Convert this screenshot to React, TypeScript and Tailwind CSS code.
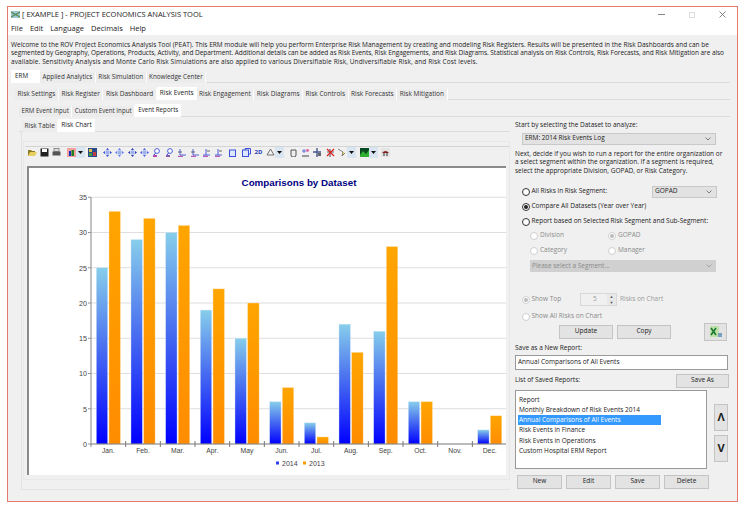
import type { ReactNode } from 'react'

const F = "font-['Open_Sans','Liberation_Sans',sans-serif]"

const months = ['Jan.', 'Feb.', 'Mar.', 'Apr.', 'May', 'Jun.', 'Jul.', 'Aug.', 'Sep.', 'Oct.', 'Nov.', 'Dec.']
const y2014 = [25, 29, 30, 19, 15, 6, 3, 17, 16, 6, 0, 2]
const y2013 = [33, 32, 31, 22, 20, 8, 1, 13, 28, 6, 0, 4]

function Tab({ label, active }: { label: string; active?: boolean }) {
  if (label === 'ERM') {
    return <div className="mb-[-1px] flex h-[13px] w-[29px] items-center bg-white pl-[4px] text-[#222]">{label}</div>
  }
  return (
    <div
      className={
        active
          ? 'flex h-[13px] items-center bg-white px-[3px] mb-[-1px] text-[#222]'
          : 'flex h-[11px] items-center bg-[#ececec] px-[2.5px] mt-[2px] border-r border-white text-[#333]'
      }
    >
      {label}
    </div>
  )
}

function TabRow({ tabs, active, className }: { tabs: string[]; active: string; className: string }) {
  return (
    <div className={`flex items-start border-b border-[#dcdcdc] ${className}`}>
      {tabs.map((t) => (
        <Tab key={t} label={t} active={t === active} />
      ))}
    </div>
  )
}

function Radio({ label, checked, off, className = '' }: { label: string; checked?: boolean; off?: boolean; className?: string }) {
  return (
    <div className={`flex items-center gap-[1.5px] ${off ? 'text-[#8a8a8a]' : 'text-[#222]'} ${className}`}>
      <span
        className={`flex h-[8px] w-[8px] items-center justify-center rounded-full border bg-white ${
          off ? 'border-[#cfcfcf]' : 'border-[#333]'
        }`}
      >
        {checked && <span className={`h-[4px] w-[4px] rounded-full ${off ? 'bg-[#bbb]' : 'bg-[#222]'}`} />}
      </span>
      {label}
    </div>
  )
}

function Chevron({ color = '#666' }: { color?: string }) {
  return (
    <svg width="6" height="4" viewBox="0 0 6 4" className="shrink-0">
      <path d="M0.5 0.5 L3 3 L5.5 0.5" fill="none" stroke={color} strokeWidth="0.8" />
    </svg>
  )
}

function Btn({ children, className }: { children: ReactNode; className: string }) {
  return (
    <div className={`flex items-center justify-center border border-[#c4c4c4] bg-[#e3e3e3] text-[#222] ${className}`}>
      {children}
    </div>
  )
}

// toolbar glyphs, drawn on a 9x9 box
function Cross({ color = '#3a50d8' }: { color?: string }) {
  return (
    <svg width="9" height="9" viewBox="0 0 9 9">
      <path d="M4.5 0 L6 2 L3 2 Z M4.5 9 L6 7 L3 7 Z M0 4.5 L2 3 L2 6 Z M9 4.5 L7 3 L7 6 Z" fill={color} />
      <rect x="2.5" y="2.5" width="4" height="4" fill="#9fb0f0" />
    </svg>
  )
}

function Pin({ color = '#a020a0' }: { color?: string }) {
  return (
    <svg width="9" height="9" viewBox="0 0 9 9">
      <circle cx="5" cy="3" r="2.4" fill="#fff" stroke="#3a50d8" strokeWidth="0.9" />
      <path d="M1 8 H5" stroke={color} strokeWidth="1.6" />
      <path d="M3.5 5 L2 7" stroke="#3a50d8" />
    </svg>
  )
}

function Axis({ flip }: { flip?: boolean }) {
  return (
    <svg width="9" height="9" viewBox="0 0 9 9">
      <path d={flip ? 'M1 7 H8 M4 1 V7' : 'M3 1 V7 M3 7 H9'} stroke="#3a50d8" strokeWidth="0.9" fill="none" />
      <path d={flip ? 'M5 3 H8' : 'M1 4 H5'} stroke="#555" strokeWidth="0.9" />
      <path d="M1 8.3 H6" stroke="#a020a0" strokeWidth="0.9" />
    </svg>
  )
}

function Square({ double }: { double?: boolean }) {
  return (
    <svg width="9" height="9" viewBox="0 0 9 9">
      <rect x="0.5" y="2" width="6" height="6.5" fill="#dfe6ff" stroke="#3a50d8" />
      {double && <path d="M3 2 V0.5 H8.5 V6 H7" fill="none" stroke="#3a50d8" />}
    </svg>
  )
}

function Drop() {
  return (
    <span className="flex h-[11px] w-[9px] items-center justify-center bg-[#d9e6f2]">
      <svg width="5" height="3" viewBox="0 0 5 3">
        <path d="M0 0 H5 L2.5 3 Z" fill="#111" />
      </svg>
    </span>
  )
}

function Toolbar() {
  return (
    <div className="flex h-[11px] items-center gap-[3.4px]">
      <svg width="9" height="9" viewBox="0 0 9 9">
        <path d="M0 2 H3 L4 3 H7 V8 H0 Z" fill="#8a7a20" />
        <path d="M2 4 H9 L7 8 H0 Z" fill="#e8d060" />
      </svg>
      <svg width="9" height="9" viewBox="0 0 9 9">
        <rect x="0.5" y="0.5" width="8" height="8" fill="#222" />
        <rect x="2" y="1" width="5" height="3" fill="#fff" />
      </svg>
      <svg width="9" height="9" viewBox="0 0 9 9">
        <rect x="2" y="0.5" width="5" height="3" fill="#ddd" stroke="#555" strokeWidth="0.6" />
        <rect x="0.5" y="3.5" width="8" height="4" fill="#555" />
      </svg>
      <span className="ml-[2px] flex items-center">
        <svg width="9" height="9" viewBox="0 0 9 9">
          <rect x="0" y="0" width="9" height="9" fill="#f4a0a0" />
          <rect x="2" y="3" width="2" height="5" fill="#1030c0" />
          <rect x="4.5" y="2" width="2.5" height="6" fill="#208020" />
        </svg>
        <Drop />
      </span>
      <svg width="9" height="9" viewBox="0 0 9 9">
        <rect width="9" height="9" fill="#2a4a90" />
        <rect x="1" y="1" width="3" height="3" fill="#e0c040" />
        <rect x="5" y="4" width="3" height="4" fill="#c04040" />
        <rect x="1" y="5" width="3" height="3" fill="#40a040" />
      </svg>
      <span className="ml-[-1px] w-0" />
      <Cross />
      <Cross color="#5a80f0" />
      <Cross color="#2a3ab0" />
      <Cross color="#4a60e0" />
      <Pin />
      <Pin color="#7030a0" />
      <Axis />
      <Axis />
      <Axis flip />
      <Axis flip />
      <span className="ml-[-1px] w-0" />
      <Square />
      <Square double />
      <span className="w-[9px] text-center text-[6px] font-bold leading-[9px] text-[#2a3ab8]">2D</span>
      <span className="flex items-center">
        <svg width="9" height="9" viewBox="0 0 9 9">
          <path d="M4.5 1 L8 7 H1 Z" fill="#eee" stroke="#555" strokeWidth="0.8" />
        </svg>
        <Drop />
      </span>
      <svg width="9" height="9" viewBox="0 0 9 9" className="ml-[1px]">
        <path d="M2 4 V2 H7 V7 Q7 9 5 9 H4 Q2 9 2 7 Z" fill="#eee" stroke="#444" strokeWidth="0.9" />
      </svg>
      <svg width="9" height="9" viewBox="0 0 9 9">
        <circle cx="3" cy="3" r="1.8" fill="#8090e0" />
        <circle cx="6.5" cy="2.5" r="1.4" fill="#e060a0" />
        <path d="M1 8 H8" stroke="#444" />
      </svg>
      <svg width="9" height="9" viewBox="0 0 9 9">
        <path d="M4 0 V9 M0 4 H8" stroke="#4a5a90" strokeWidth="1.4" />
        <rect x="5" y="5" width="3" height="3" fill="#666" />
      </svg>
      <svg width="9" height="9" viewBox="0 0 9 9">
        <path d="M4 1 V9 M1 4 H8" stroke="#667" strokeWidth="1.2" />
        <path d="M1 1 L8 8 M8 1 L1 8" stroke="#e02020" strokeWidth="1.2" />
      </svg>
      <span className="flex items-center">
        <svg width="9" height="9" viewBox="0 0 9 9">
          <path d="M0 1 L5 4 L4 8 L7 5" fill="#f0ee60" stroke="#555" strokeWidth="0.7" />
        </svg>
        <Drop />
      </span>
      <span className="flex items-center">
        <svg width="9" height="9" viewBox="0 0 9 9">
          <rect width="9" height="9" fill="#0a4a20" />
          <path d="M0 7 L3 3 L6 6 L9 2 V9 H0 Z" fill="#30b030" />
        </svg>
        <Drop />
      </span>
      <svg width="9" height="9" viewBox="0 0 9 9">
        <rect width="9" height="9" rx="1" fill="#e4e4e4" />
        <path d="M1 5 Q4.5 1 8 5 Z" fill="#802020" />
        <path d="M3 5 V8 M6 5 V8" stroke="#333" />
      </svg>
    </div>
  )
}

function Chart() {
  const x0 = 62
  const bottom = 276
  const unit = 7.05
  const cat = 34.67
  return (
    <svg width="477" height="307" viewBox="0 0 477 307" className="block">
      <defs>
        <linearGradient id="blue" x1="0" y1="0" x2="0" y2="1">
          <stop offset="0" stopColor="#87ceeb" />
          <stop offset="0.45" stopColor="#4a70f0" />
          <stop offset="1" stopColor="#0000ff" />
        </linearGradient>
        <linearGradient id="orange" x1="0" y1="0" x2="0" y2="1">
          <stop offset="0" stopColor="#ffa500" />
          <stop offset="1" stopColor="#ff8c00" />
        </linearGradient>
      </defs>
      <text x="270" y="18" textAnchor="middle" fontFamily="'Liberation Sans', sans-serif" fontWeight="700" fontSize="9.8" fill="#000080">
        Comparisons by Dataset
      </text>
      {[0, 5, 10, 15, 20, 25, 30, 35].map((v) => {
        const y = bottom - v * unit
        return (
          <g key={v}>
            {v > 0 && <line x1={x0} x2="477" y1={y} y2={y} stroke="#dedede" strokeWidth="1.2" />}
            <line x1={x0 - 3} x2={x0} y1={y} y2={y} stroke="#777" strokeWidth="0.8" />
            <text x={x0 - 4} y={y + 2.8} textAnchor="end" fontFamily="'Liberation Sans', sans-serif" fontSize="7.2" fill="#444">
              {v}
            </text>
          </g>
        )
      })}
      {months.map((m, i) => {
        const cx = x0 + i * cat
        const a = y2014[i] * unit
        const b = y2013[i] * unit
        return (
          <g key={m}>
            {a > 0 && <rect x={cx + 5.3} y={bottom - a} width="11.4" height={a} fill="url(#blue)" stroke="#d8e8f8" strokeWidth="0.4" />}
            {b > 0 && <rect x={cx + 18} y={bottom - b} width="11.4" height={b} fill="url(#orange)" stroke="#ffe0b0" strokeWidth="0.4" />}
            <line x1={cx + cat} x2={cx + cat} y1={bottom - 3} y2={bottom + 3} stroke="#555" strokeWidth="0.8" />
            <text x={cx + cat / 2} y={bottom + 9} textAnchor="middle" fontFamily="'Liberation Sans', sans-serif" fontSize="6.8" fill="#444">
              {m}
            </text>
          </g>
        )
      })}
      <line x1={x0} x2={x0} y1={bottom - 35 * unit} y2={bottom + 3} stroke="#999" strokeWidth="1.2" />
      <line x1={x0} x2="477" y1={bottom} y2={bottom} stroke="#777" strokeWidth="1" />
      <rect x="247" y="293.5" width="3" height="3" fill="#2a40f0" />
      <text x="253" y="297.5" fontFamily="'Liberation Sans', sans-serif" fontSize="7" fill="#444">2014</text>
      <rect x="274" y="293.5" width="3" height="3" fill="#ff9a00" />
      <text x="280" y="297.5" fontFamily="'Liberation Sans', sans-serif" fontSize="7" fill="#444">2013</text>
    </svg>
  )
}

function SidePanel() {
  return (
    <div className="w-[214px] shrink-0 text-[6.5px] leading-[8.5px]">
      <div className="mt-[4px]">Start by selecting the Dataset to analyze:</div>
      <div className="ml-[7px] mt-[3px] flex h-[12px] w-[194px] items-center justify-between border border-[#c8c8c8] bg-[#e2e2e2] pl-[2px] pr-[4px]">
        ERM: 2014 Risk Events Log
        <Chevron />
      </div>
      <p className="mt-[5px] w-[212px]">
        Next, decide if you wish to run a report for the entire organization or a select segment within the
        organization. If a segment is required, select the appropriate Division, GOPAD, or Risk Category.
      </p>
      <div className="ml-[7px] mt-[12px] flex w-[195px] flex-col gap-[6px]">
        <div className="flex h-[9px] items-center justify-between">
          <Radio label="All Risks in Risk Segment:" />
          <div className="flex h-[12px] w-[65px] items-center justify-between border border-[#c8c8c8] bg-[#e2e2e2] pl-[2px] pr-[4px]">
            GOPAD
            <Chevron />
          </div>
        </div>
        <Radio label="Compare All Datasets (Year over Year)" checked className="h-[9px]" />
        <Radio label="Report based on Selected Risk Segment and Sub-Segment:" className="h-[9px]" />
      </div>
      <div className="ml-[15px] mt-[5px] grid w-[156px] grid-cols-2 gap-y-[6px]">
        <Radio label="Division" off className="h-[9px] gap-[2px]" />
        <Radio label="GOPAD" checked off className="h-[9px] gap-[2px]" />
        <Radio label="Category" off className="h-[9px] gap-[2px]" />
        <Radio label="Manager" off className="h-[9px] gap-[2px]" />
      </div>
      <div className="ml-[15px] mt-[5px] flex h-[12px] w-[186px] items-center justify-between bg-[#d0d0d0] pl-[2px] pr-[4px] text-[#8a8a8a]">
        Please select a Segment...
        <Chevron color="#999" />
      </div>
      <div className="ml-[7px] mt-[21px] flex h-[13px] items-center">
        <Radio label="Show Top" checked off className="w-[58px]" />
        <div className="flex h-[13px] w-[37px] items-center justify-between border border-[#d8d8d8] pl-[12px] text-[#999]">
          5
          <span className="flex h-full w-[9px] flex-col gap-[1px] bg-[#e8e8e8] text-center text-[4px] leading-[5px] text-[#555]">
            <span>▲</span>
            <span>▼</span>
          </span>
        </div>
        <span className="ml-[3px] text-[#9a9a9a]">Risks on Chart</span>
      </div>
      <Radio label="Show All Risks on Chart" off className="ml-[7px] mt-[6px] h-[9px]" />
      <div className="mt-[3px] flex h-[15px] items-center">
        <Btn className="ml-[44px] h-[14px] w-[54px]">Update</Btn>
        <Btn className="ml-[4px] h-[14px] w-[54px]">Copy</Btn>
        <Btn className="ml-[33px] h-[18px] w-[23px]">
          <svg width="12" height="11" viewBox="0 0 12 11">
            <rect x="0" y="0" width="9" height="11" fill="#bfe0a8" />
            <path d="M1 2 L6 9 M6 2 L1 9" stroke="#1a7a30" strokeWidth="1.6" />
            <path d="M8 7 H12 V11 H8 Z" fill="#7aa0c0" />
          </svg>
        </Btn>
      </div>
      <div className="mt-[5px]">Save as a New Report:</div>
      <div className="mt-[2px] flex h-[15px] w-[213px] items-center border border-[#9a9a9a] bg-white pl-[2px]">
        Annual Comparisons of All Events
      </div>
      <div className="mt-[4px] flex h-[14px] items-center justify-between">
        List of Saved Reports:
        <Btn className="h-[14px] w-[53px]">Save As</Btn>
      </div>
      <div className="mt-[2px] flex items-start">
        <div className="h-[79px] w-[192px] border border-[#999] bg-white pl-[2px] pt-[4px] leading-[10.3px]">
          <div className="w-[143px] pl-[1px]">Report</div>
          <div className="w-[143px] pl-[1px]">Monthly Breakdown of Risk Events 2014</div>
          <div className="w-[143px] bg-[#3399ff] pl-[1px] text-white">Annual Comparisons of All Events</div>
          <div className="w-[143px] pl-[1px]">Risk Events in Finance</div>
          <div className="w-[143px] pl-[1px]">Risk Events in Operations</div>
          <div className="w-[143px] pl-[1px]">Custom Hospital ERM Report</div>
        </div>
        <div className="ml-[7px] mt-[14px] flex flex-col gap-[4px]">
          <Btn className="h-[27px] w-[14px] text-[11px] font-bold">Λ</Btn>
          <Btn className="h-[27px] w-[14px] text-[11px] font-bold">V</Btn>
        </div>
      </div>
      <div className="ml-[2px] mt-[6px] flex gap-[4px]">
        <Btn className="h-[14px] w-[45px]">New</Btn>
        <Btn className="h-[14px] w-[45px]">Edit</Btn>
        <Btn className="h-[14px] w-[45px]">Save</Btn>
        <Btn className="h-[14px] w-[45px]">Delete</Btn>
      </div>
    </div>
  )
}

export default function App() {
  return (
    <div className={`h-[507px] w-[745px] overflow-hidden bg-white pl-[7px] pt-[6px] text-[#222] ${F}`}>
      <div className="flex h-[496px] w-[731px] flex-col border border-[#e8776c] bg-[#f0f0f0] text-[6.5px] leading-[8.5px]">
        <div className="flex h-[15px] shrink-0 items-center justify-between bg-white pl-[3px] pr-[11px] text-[7.5px]">
          <div className="flex items-center gap-[2px]">
            <svg width="9" height="7" viewBox="0 0 9 7">
              <rect width="9" height="7" fill="#9cc8d8" />
              <path d="M0 1 L9 6 M0 6 L9 1" stroke="#5a8a50" strokeWidth="1.2" />
            </svg>
            <span>[ EXAMPLE ] - PROJECT ECONOMICS ANALYSIS TOOL</span>
          </div>
          <div className="flex items-center gap-[24px]">
            <span className="h-[1px] w-[7px] bg-[#888]" />
            <span className="h-[6px] w-[6px] border border-[#ddd]" />
            <svg width="7" height="7" viewBox="0 0 7 7">
              <path d="M0.5 0.5 L6.5 6.5 M6.5 0.5 L0.5 6.5" stroke="#666" strokeWidth="0.8" />
            </svg>
          </div>
        </div>
        <div className="flex h-[13px] shrink-0 items-center gap-[7px] bg-white pl-[3px] text-[7.5px]">
          <span>File</span>
          <span>Edit</span>
          <span>Language</span>
          <span>Decimals</span>
          <span>Help</span>
        </div>
        <div className="flex min-h-0 flex-1 flex-col pl-[3px] pr-[3px]">
          <p className="mt-[6px] h-[26px] whitespace-nowrap leading-[8.4px]">
            Welcome to the ROV Project Economics Analysis Tool (PEAT). This ERM module will help you perform Enterprise
            Risk Management by creating and modeling Risk Registers. Results will be presented in the Risk Dashboards
            and can be
            <br />
            <span className="tracking-[-0.05px]">
              segmented by Geography, Operations, Products, Activity, and Department. Additional details can be added as
              Risk Events, Risk Engagements, and Risk Diagrams. Statistical analysis on Risk Controls, Risk Forecasts,
              and Risk Mitigation are also
            </span>
            <br />
            <span className="tracking-[0.1px]">
              available. Sensitivity Analysis and Monte Carlo Risk Simulations are also applied to various Diversifiable
              Risk, Undiversifiable Risk, and Risk Cost levels.
            </span>
          </p>
          <TabRow
            tabs={['ERM', 'Applied Analytics', 'Risk Simulation', 'Knowledge Center']}
            active="ERM"
            className="mt-[3px] h-[13px] w-[719px] text-[6.3px]"
          />
          <div className="ml-[4px] w-[715px]">
            <TabRow
              tabs={[
                'Risk Settings',
                'Risk Register',
                'Risk Dashboard',
                'Risk Events',
                'Risk Engagement',
                'Risk Diagrams',
                'Risk Controls',
                'Risk Forecasts',
                'Risk Mitigation',
              ]}
              active="Risk Events"
              className="mt-[4px] h-[13px]"
            />
            <div className="ml-[4px]">
              <TabRow
                tabs={['ERM Event Input', 'Custom Event Input', 'Event Reports']}
                active="Event Reports"
                className="mt-[4px] h-[13px] text-[6.2px]"
              />
              <div className="flex">
                <div className="w-[491px] shrink-0">
                  <TabRow tabs={['Risk Table', 'Risk Chart']} active="Risk Chart" className="mt-[2px] h-[13px] pl-[3px]" />
                  <div className="ml-[2px] h-[358px] border-b border-l border-[#e2e2e2] pt-[9px]">
                    <div className="ml-[1px] h-[339px] border border-[#e8e8e8] pt-[4px]">
                      <div className="ml-[1px] border-t border-[#d4d4d4] pl-[2.5px]">
                        <Toolbar />
                      </div>
                      <div className="ml-[3px] mt-[8px] w-[479px] border-l-2 border-t-2 border-[#8a8a8a] bg-white">
                        <Chart />
                      </div>
                    </div>
                  </div>
                </div>
                <div className="ml-[5px]">
                  <SidePanel />
                </div>
              </div>
            </div>
          </div>
        </div>
      </div>
    </div>
  )
}
